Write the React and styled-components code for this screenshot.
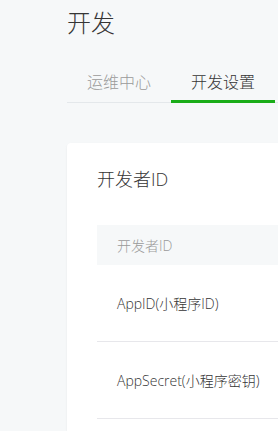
import React from 'react';
import styled, { createGlobalStyle } from 'styled-components';

const GlobalStyle = createGlobalStyle`
  body {
    margin: 0;
    background-color: #f6f8f9;
    font-family: "Open Sans", "Noto Sans CJK SC", sans-serif;
    font-weight: 300;
    color: #353535;
  }
`;

const Page = styled.div`
  padding: 0 0 0 67px;
  overflow: hidden;
`;

const Title = styled.h2`
  margin: 0;
  padding-top: 6px;
  font-size: 24px;
  font-weight: 300;
  line-height: 34px;
`;

const Tabs = styled.div`
  display: flex;
  margin-top: 30px;
  border-bottom: 1px solid #e4e8eb;
  width: 600px;
`;

const Tab = styled.div`
  width: 104px;
  text-align: center;
  font-size: 16px;
  line-height: 24px;
  padding-bottom: 6px;
  margin-bottom: -1px;
  color: ${p => (p.active ? '#353535' : '#9a9a9a')};
  border-bottom: 3px solid ${p => (p.active ? '#1aad19' : 'transparent')};
`;

const Card = styled.div`
  margin-top: 40px;
  width: 600px;
  background-color: #fff;
  border-radius: 4px 4px 0 0;
  padding: 22px 30px 12px;
  box-shadow: 0 1px 2px rgba(150, 150, 150, 0.15);
`;

const CardTitle = styled.h3`
  margin: 0;
  font-size: 18px;
  font-weight: 300;
  line-height: 28px;
`;

const Table = styled.div`
  margin-top: 32px;
`;

const HeadRow = styled.div`
  height: 40px;
  display: flex;
  align-items: center;
  padding-left: 20px;
  background-color: #f6f8f9;
  color: #9a9a9a;
  font-size: 14px;
`;

const Row = styled.div`
  height: 76px;
  display: flex;
  align-items: center;
  padding-left: 20px;
  border-bottom: 1px solid #e7e7eb;
  font-size: 14px;
`;

const App = () => {
  return (
    <Page>
      <GlobalStyle />
      <Title>开发</Title>
      <Tabs>
        <Tab>运维中心</Tab>
        <Tab active>开发设置</Tab>
      </Tabs>
      <Card>
        <CardTitle>开发者ID</CardTitle>
        <Table>
          <HeadRow>开发者ID</HeadRow>
          <Row>AppID(小程序ID)</Row>
          <Row>AppSecret(小程序密钥)</Row>
        </Table>
      </Card>
    </Page>
  );
};

export default App;
